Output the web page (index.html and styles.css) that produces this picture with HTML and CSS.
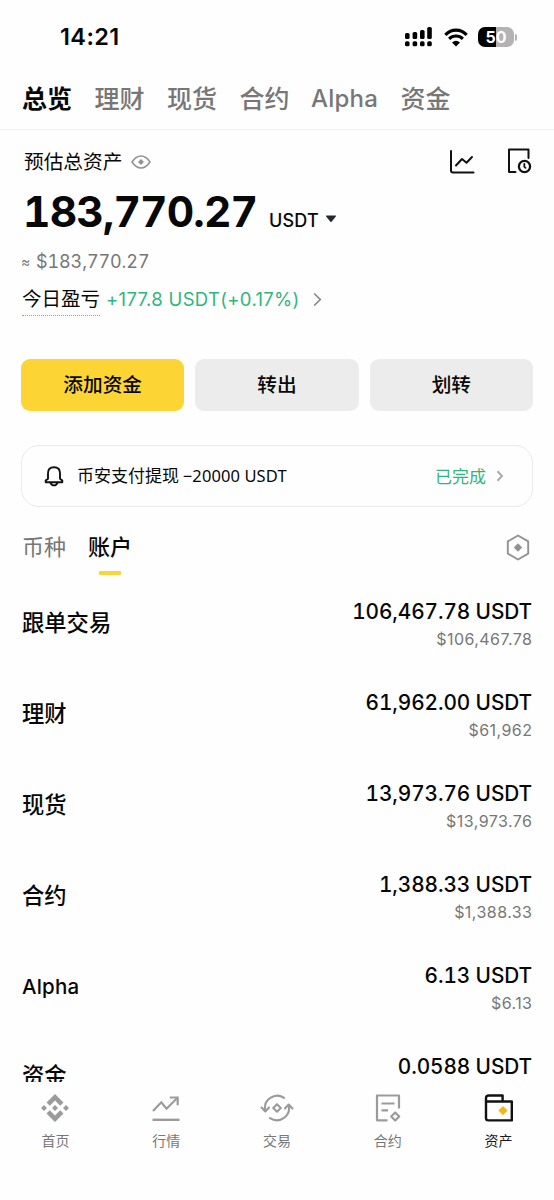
FILE: index.html
```html
<!DOCTYPE html>
<html lang="zh-CN">
<head>
<meta charset="utf-8">
<title>资产</title>
<link rel="stylesheet" href="styles.css">
</head>
<body>
<div class="screen">
  <header class="status">
    <span class="clock">14:21</span>
    <div class="status-icons">
      <svg class="signal" width="28" height="20" viewBox="0 0 28 20">
        <g fill="#000"><rect x="0" y="6" width="4.6" height="6" rx="1.6"/><rect x="7.6" y="5" width="4.6" height="7" rx="1.6"/><rect x="15" y="3" width="4.6" height="9" rx="1.6"/><rect x="22.2" y="0" width="4.6" height="12" rx="1.6"/><rect x="0" y="14.3" width="4.6" height="5" rx="1.6"/><rect x="7.6" y="14.3" width="4.6" height="5" rx="1.6"/><rect x="15" y="14.3" width="4.6" height="5" rx="1.6"/><rect x="22.2" y="14.3" width="4.6" height="5" rx="1.6"/></g>
      </svg>
      <svg class="wifi" width="24" height="19" viewBox="0 0 24 19">
        <g fill="none" stroke="#000" stroke-width="3.1"><path d="M1.3 6.8Q6 2.1 12 2.1T22.700 6.800"/><path d="M5.100 10.800Q8 8 12 8T18.900 10.800"/></g>
        <path d="M12 18.500L8 14.500Q12 11.200 16 14.500Z" fill="#000"/>
      </svg>
      <div class="battery"><span class="battery-text">50</span></div><i class="battery-tip"></i>
    </div>
  </header>

  <nav class="tabs">
    <span class="tab tab-on">总览</span><span class="tab">理财</span><span class="tab">现货</span><span class="tab">合约</span><span class="tab tab-latin">Alpha</span><span class="tab">资金</span>
  </nav>

  <section class="summary">
    <div class="summary-head">
      <span class="summary-title">预估总资产</span>
      <svg class="eye" width="20" height="14" viewBox="0 0 20 14"><path d="M1 7Q5 1 10 1T19 7Q15 13 10 13T1 7Z" fill="none" stroke="#929292" stroke-width="1.5"/><path d="M10 4L13 7L10 10L7 7Z" fill="#929292"/></svg>
      <svg class="chart" width="26" height="25" viewBox="0 0 26 25"><g fill="none" stroke="#111" stroke-width="2" stroke-linecap="round" stroke-linejoin="round"><path d="M2 2V21.500Q2 23.500 4 23.500H24.500"/><path d="M7 16.500L13 10L17.500 13.800L23 8"/></g></svg>
      <svg class="history" width="25" height="26" viewBox="0 0 25 26"><g fill="none" stroke="#111" stroke-width="2" stroke-linecap="round" stroke-linejoin="round"><path d="M8.500 24H2V1.500H21.500V10"/><circle cx="17.500" cy="18.500" r="5.600" stroke-width="2.300"/><path d="M17.300 16V18.700L18.500 19.800" stroke-width="1.800"/></g></svg>
    </div>
    <div class="amount"><span class="amount-num">183,770.27</span><span class="amount-unit">USDT</span><svg class="caret" width="12" height="8" viewBox="0 0 12 8"><path d="M1.700 .5H10.300Q11.500 .5 10.800 1.600L6.600 6.800Q6 7.500 5.400 6.800L1.200 1.600Q.5 .5 1.700 .5Z" fill="#242833"/></svg></div>
    <div class="approx"><span class="approx-sign">≈</span><span class="approx-num">$183,770.27</span></div>
    <div class="pnl"><span class="pnl-label">今日盈亏</span><span class="pnl-value">+177.8 USDT(+0.17%)</span><svg class="pnl-arrow" width="9" height="15" viewBox="0 0 9 15"><path d="M1.200 1.500L7.300 7.500L1.200 13.500" fill="none" stroke="#888" stroke-width="1.700"/></svg></div>
  </section>

  <div class="actions"><div class="btn btn-main">添加资金</div><div class="btn">转出</div><div class="btn">划转</div></div>

  <div class="notice">
    <svg class="bell" width="20" height="21" viewBox="0 0 20 21"><g fill="none" stroke="#111" stroke-width="1.900" stroke-linejoin="round"><path d="M4 12.700V7.300Q4 1.200 10 1.200T16 7.300V12.700L18.300 14.600V16.200H1.700V14.600Z"/><path d="M6.500 16.600Q7.500 19.400 10 19.400T13.500 16.600"/></g></svg>
    <span class="notice-text">币安支付提现 <span class="notice-num">−20000 USDT</span></span>
    <span class="notice-state">已完成</span>
    <svg width="8" height="12" viewBox="0 0 8 12"><path d="M1.500 1.200L6 6L1.500 10.800" fill="none" stroke="#a8adb3" stroke-width="2"/></svg>
  </div>

  <div class="subtabs">
    <span class="subtab">币种</span><span class="subtab subtab-on">账户</span>
    <svg class="hex" width="24" height="27" viewBox="0 0 24 27"><path d="M12 1.500L22.200 7.400V19.600L12 25.500L1.800 19.600V7.400Z" fill="none" stroke="#929292" stroke-width="1.900" stroke-linejoin="round"/><path d="M12 9.300L16.200 13.500L12 17.700L7.800 13.500Z" fill="#929292"/></svg>
  </div>

  <main class="list">
    <div class="row"><span class="name">跟单交易</span><div class="vals"><span class="val">106,467.78 USDT</span><span class="fiat">$106,467.78</span></div></div>
    <div class="row"><span class="name">理财</span><div class="vals"><span class="val">61,962.00 USDT</span><span class="fiat">$61,962</span></div></div>
    <div class="row"><span class="name">现货</span><div class="vals"><span class="val">13,973.76 USDT</span><span class="fiat">$13,973.76</span></div></div>
    <div class="row"><span class="name">合约</span><div class="vals"><span class="val">1,388.33 USDT</span><span class="fiat">$1,388.33</span></div></div>
    <div class="row"><span class="name name-latin">Alpha</span><div class="vals"><span class="val">6.13 USDT</span><span class="fiat">$6.13</span></div></div>
    <div class="row"><span class="name name-last">资金</span><div class="vals"><span class="val">0.0588 USDT</span></div></div>
  </main>

  <footer class="nav">
    <div class="nav-item"><svg width="30" height="30" viewBox="0 0 30 30"><g fill="#9b9b9b"><path d="M15 1L23.500 9.500L20.200 12.700L15 7.600L9.800 12.700L6.500 9.500Z"/><path d="M15 29L23.500 20.500L20.200 17.300L15 22.400L9.800 17.300L6.500 20.500Z"/><path d="M15 12L18 15L15 18L12 15ZM4 12L7 15L4 18L1 15ZM26 12L29 15L26 18L23 15Z"/></g></svg><span>首页</span></div>
    <div class="nav-item"><svg width="30" height="30" viewBox="0 0 30 30"><g fill="none" stroke="#9b9b9b" stroke-width="2.200"><path d="M2 18L10.300 9.300L15.500 15.700L26.500 4.800"/><path d="M18.800 4.500H26.700V12.300"/><path d="M1.500 26.800H28.500" stroke-width="2.400"/></g></svg><span>行情</span></div>
    <div class="nav-item"><svg width="34" height="30" viewBox="0 0 34 30"><g fill="none" stroke="#9b9b9b" stroke-width="2.100" stroke-linecap="round" stroke-linejoin="round"><path d="M24 4.800A12.300 12.300 0 0 0 5.200 17.500"/><path d="M1.500 14.500L5.300 18.500L9 14.500"/><path d="M10 25.200A12.300 12.300 0 0 0 28.800 12.500"/><path d="M25 15.500L28.700 11.500L32.500 15.500"/><path d="M17 11.200L20.800 15L17 18.800L13.200 15Z"/></g></svg><span>交易</span></div>
    <div class="nav-item"><svg width="30" height="30" viewBox="0 0 30 30"><g fill="none" stroke="#9b9b9b" stroke-width="2.200" stroke-linejoin="round"><path d="M14.500 27.300H4V2.500H26V15.500"/><path d="M8.500 10.500H21.500M8.500 17.300H15"/><path d="M22.200 19.500L26.200 23.500L22.200 27.500L18.200 23.500Z"/></g></svg><span>合约</span></div>
    <div class="nav-item nav-on"><svg width="30" height="30" viewBox="0 0 30 30"><g fill="none" stroke="#111" stroke-width="2.400" stroke-linejoin="round"><path d="M2 8.500V25Q2 27.400 4.400 27.400H27.800V8.500Z"/><path d="M2 8.500V5.500Q2 2.500 5 2.500H18.600V8.500"/></g><path d="M19 13L23.600 17.600L19 22.200L14.400 17.600Z" fill="#efb719"/></svg><span>资产</span></div>
  </footer>
</div>
</body>
</html>
```

FILE: styles.css
```css
* { box-sizing: border-box; }
body { margin: 0; background: #fefefe; color: #080808; font-family: Inter, "Noto Sans CJK SC", sans-serif; }
svg { display: block; flex: none; }
.screen { width: 554px; height: 1200px; overflow: hidden; display: flex; flex-direction: column; white-space: nowrap; }

.status { height: 74px; flex: none; display: flex; justify-content: space-between; align-items: center; padding: 0 38px 0 60px; }
.clock { font: 600 23.500px/30px Inter, sans-serif; letter-spacing: 0.400px; }
.status-icons { display: flex; align-items: center; }
.wifi { margin: 0 10px 0 11px; }
.battery { width: 36px; height: 20px; border-radius: 7px; background: linear-gradient(90deg, #000 50%, #b3b3b3 50%); display: flex; align-items: center; justify-content: center; }
.battery-text { font: 700 16px/20px Inter, sans-serif; color: #fff; }
.battery-tip { width: 2px; height: 7px; margin-left: 1px; margin-right: -1px; border-radius: 0 2px 2px 0; background: #b3b3b3; }

.tabs { height: 56px; flex: none; display: flex; gap: 22.500px; padding-left: 22px; border-bottom: 1px solid #f0f0f0; font: 500 25px/46px "Noto Sans CJK SC", sans-serif; color: #777; }
.tab-on { color: #080808; font-weight: 700; }
.tab-latin { font: 500 24px/49px Inter, sans-serif; width: 67px; margin-left: -1px; letter-spacing: 0.200px; }

.summary { height: 229px; flex: none; padding: 0 22px; }
.summary-head { height: 62px; display: flex; align-items: center; padding-left: 2px; }
.summary-title { font: 400 19.700px/28px "Noto Sans CJK SC", sans-serif; }
.eye { margin-left: 9px; margin-top: 2px; }
.chart { margin-left: auto; margin-right: 1px; }
.history { margin-left: 31px; }
.amount { height: 50px; display: flex; align-items: baseline; }
.amount-num { width: 247px; padding-left: 1px; font-size: 42.500px; line-height: 40px; font-weight: 700; letter-spacing: -0.850px; font-feature-settings: "tnum"; }
.amount-unit { font-size: 18px; font-weight: 500; letter-spacing: 0.200px; }
.caret { margin-left: 6px; align-self: center; margin-top: 4px; }
.approx { height: 34px; display: flex; line-height: 39px; color: #777; font-size: 18px; }
.approx-sign { width: 14px; font-size: 14px; margin-left: -1px; }
.approx-num { letter-spacing: -0.100px; margin-left: 1px; font-feature-settings: "tnum"; }
.pnl { height: 40px; display: flex; align-items: flex-start; padding-top: 4px; }
.pnl-label { font: 400 19.500px/35px "Noto Sans CJK SC", sans-serif; height: 36px; border-bottom: 1px dotted #999; }
.pnl-value { margin-left: 6px; width: 194px; font-size: 18.500px; line-height: 38px; letter-spacing: 0.320px; color: #2fb67c; }
.pnl-arrow { margin: 12px 0 0 13px; }

.actions { flex: none; height: 52px; margin: 0 21px; display: flex; gap: 11px; }
.btn { flex: 1; border-radius: 9px; background: #ececec; text-align: center; font: 500 19.700px/50px "Noto Sans CJK SC", sans-serif; }
.btn-main { background: #fcd535; }

.notice { flex: none; height: 62px; margin: 34px 21px 0; padding: 0 28px 0 22px; border: 1px solid #eaeaea; border-radius: 18px; display: flex; align-items: center; }
.notice-text { margin-left: 13px; font: 400 17px/26px "Noto Sans CJK SC", sans-serif; padding-bottom: 1px; }
.notice-num { font-family: "Noto Sans", sans-serif; font-size: 16.500px; letter-spacing: 0.100px; }
.notice-state { margin-left: auto; margin-right: 10px; font: 400 17px/26px "Noto Sans CJK SC", sans-serif; color: #2fb67c; padding-bottom: 1px; }

.subtabs { flex: none; height: 70px; padding: 17px 24px 0 22px; display: flex; align-items: flex-start; }
.subtab { font: 400 22px/42px "Noto Sans CJK SC", sans-serif; color: #777; }
.subtab-on { margin-left: 22px; font-weight: 500; color: #080808; display: flex; flex-direction: column; align-items: center; }
.subtab-on::after { content: ""; width: 22px; height: 4px; border-radius: 1px; margin-top: 5px; background: #fcd535; }
.hex { margin-left: auto; margin-top: 10px; }

.list { flex: none; height: 505px; overflow: hidden; padding: 0 22px; }
.row { height: 91px; display: flex; justify-content: space-between; }
.name { font: 500 22.300px/88px "Noto Sans CJK SC", sans-serif; }
.name-latin { font: 500 20.500px/91px Inter, sans-serif; letter-spacing: 0.200px; }
.name-last { line-height: 85px; }
.vals { display: flex; flex-direction: column; align-items: flex-end; padding-top: 20px; }
.val { font-size: 20.800px; line-height: 30px; font-weight: 550; letter-spacing: -0.100px; font-feature-settings: "tnum"; }
.fiat { font-size: 16px; line-height: 25px; letter-spacing: 0.450px; margin-right: -0.450px; color: #777; }

.nav { flex: none; height: 118px; display: flex; padding-top: 11px; }
.nav-item { flex: 1; display: flex; flex-direction: column; align-items: center; font: 400 14px/22px "Noto Sans CJK SC", sans-serif; color: #777; gap: 6px; }
.nav-on { color: #151a26; }
```
